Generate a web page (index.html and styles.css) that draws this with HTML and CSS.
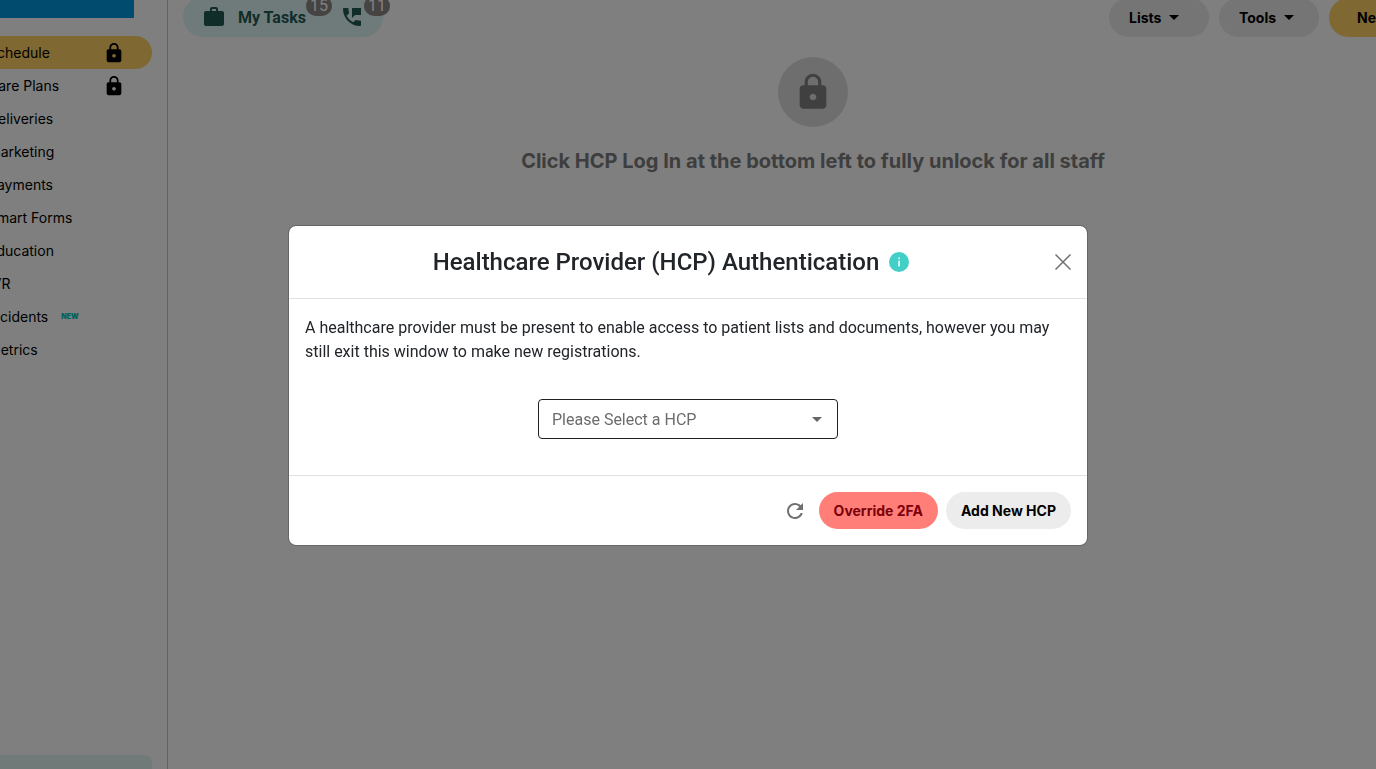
FILE: index.html
```
<!DOCTYPE html>
<html lang="en">
<head>
<meta charset="utf-8">
<title>Schedule</title>
<link rel="stylesheet" href="styles.css">
</head>
<body>
<svg class="sprite" aria-hidden="true">
  <symbol id="lock" viewBox="0 0 24 24"><path d="M18 8h-1V6c0-2.760-2.240-5-5-5S7 3.240 7 6v2H6c-1.100 0-2 .9-2 2v10c0 1.100.9 2 2 2h12c1.100 0 2-.9 2-2V10c0-1.100-.9-2-2-2zm-6 9c-1.100 0-2-.9-2-2s.9-2 2-2 2 .9 2 2-.9 2-2 2zm3.100-9H8.900V6c0-1.710 1.390-3.100 3.100-3.100s3.100 1.390 3.100 3.100v2z"/></symbol>
  <symbol id="caret" viewBox="0 0 10 5"><path d="M0 0h10L5 5z"/></symbol>
</svg>

<div class="app">
  <aside class="sidebar">
    <div class="brand"></div>
    <nav class="menu">
      <a class="item active" href="#">Schedule<svg class="item-lock"><use href="#lock"/></svg></a>
      <a class="item" href="#">Care Plans<svg class="item-lock"><use href="#lock"/></svg></a>
      <a class="item" href="#">Deliveries</a>
      <a class="item" href="#">Marketing</a>
      <a class="item" href="#">Payments</a>
      <a class="item" href="#">Smart Forms</a>
      <a class="item" href="#">Education</a>
      <a class="item" href="#">IVR</a>
      <a class="item" href="#">Incidents<span class="new">NEW</span></a>
      <a class="item" href="#">Metrics</a>
    </nav>
    <div class="login"></div>
  </aside>

  <main class="main">
    <header class="topbar">
      <div class="tasks">
        <button class="task" type="button">
          <svg class="task-icon" viewBox="0 0 24 24"><path d="M20 6h-4V4c0-1.110-.89-2-2-2h-4c-1.110 0-2 .89-2 2v2H4c-1.110 0-2 .89-2 2v11c0 1.110.89 2 2 2h16c1.110 0 2-.89 2-2V8c0-1.110-.89-2-2-2zm-6 0h-4V4h4v2z"/></svg>
          My Tasks
          <span class="badge">15</span>
        </button>
        <button class="task" type="button" aria-label="Calls">
          <svg class="task-icon" viewBox="0 0 24 24"><path d="M20 15.500c-1.250 0-2.450-.2-3.570-.57-.35-.11-.74-.03-1.020.24l-2.200 2.200c-2.830-1.440-5.150-3.750-6.590-6.580l2.200-2.210c.28-.27.36-.66.25-1.010C8.700 6.450 8.500 5.250 8.500 4c0-.55-.45-1-1-1H4c-.55 0-1 .45-1 1 0 9.390 7.610 17 17 17 .55 0 1-.45 1-1v-3.500c0-.55-.45-1-1-1zM12 3v10l3-3h6V3h-9z"/></svg>
          <span class="badge">11</span>
        </button>
      </div>
      <div class="actions">
        <button class="pill" type="button">Lists<svg class="caret"><use href="#caret"/></svg></button>
        <button class="pill" type="button">Tools<svg class="caret"><use href="#caret"/></svg></button>
        <button class="pill primary" type="button">New</button>
      </div>
    </header>
    <section class="locked">
      <div class="locked-circle"><svg class="locked-icon"><use href="#lock"/></svg></div>
      <h2 class="locked-title">Click HCP Log In at the bottom left to fully unlock for all staff</h2>
    </section>
  </main>
</div>

<div class="backdrop">
  <div class="dialog" role="dialog" aria-modal="true" aria-labelledby="dialog-title">
    <header class="dialog-head">
      <h1 class="dialog-title" id="dialog-title">Healthcare Provider (HCP) Authentication</h1>
      <svg class="info" viewBox="0 0 20 20"><circle class="info-disc" cx="10" cy="10" r="10"/><path class="info-mark" d="M9.300 5.500h1.500v1.500H9.300zM9.300 8.500h1.500v6H9.300z"/></svg>
      <button class="close" type="button" aria-label="Close"><svg class="close-icon" viewBox="0 0 16 16"><path d="M.5.5l15 15M15.500.5l-15 15"/></svg></button>
    </header>
    <div class="dialog-body">
      <p class="note">A healthcare provider must be present to enable access to patient lists and documents, however you may still exit this window to make new registrations.</p>
      <div class="field">
        <select class="select" aria-label="Healthcare provider"><option>Please Select a HCP</option></select>
        <svg class="field-caret"><use href="#caret"/></svg>
      </div>
    </div>
    <footer class="dialog-foot">
      <button class="refresh" type="button" aria-label="Refresh"><svg class="refresh-icon" viewBox="0 0 24 24"><path d="M17.650 6.350C16.200 4.900 14.210 4 12 4c-4.420 0-7.990 3.580-7.990 8s3.570 8 7.990 8c3.730 0 6.840-2.550 7.730-6h-2.080c-.82 2.330-3.040 4-5.650 4-3.310 0-6-2.690-6-6s2.690-6 6-6c1.660 0 3.140.69 4.220 1.780L13 11h7V4l-2.350 2.350z"/></svg></button>
      <button class="action danger" type="button">Override 2FA</button>
      <button class="action" type="button">Add New HCP</button>
    </footer>
  </div>
</div>
</body>
</html>
```
FILE: styles.css
```
* { box-sizing: border-box; }
body { margin: 0; overflow: hidden; font-family: Inter, "Liberation Sans", sans-serif; color: #212529; background: #fff; }
button { border: 0; background: none; padding: 0; font-family: inherit; color: inherit; cursor: pointer; }
.sprite { display: none; }

.app { display: flex; height: 100vh; margin: 0 -82px 0 -60px; }

.sidebar { display: flex; flex-direction: column; flex: none; width: 228px; border-right: 1px solid #c4c4c4; }
.brand { height: 18px; width: 194px; background: #0096dc; }
.menu { display: flex; flex-direction: column; margin-top: 18px; padding-right: 15px; }
.item { display: flex; align-items: center; height: 33px; padding: 0 27px 0 48px; border-radius: 0 17px 17px 0; font-size: 14px; color: #000; text-decoration: none; }
.active { background: #ffd062; }
.item-lock { width: 22px; height: 22px; margin-left: auto; }
.new { margin-left: 13px; font-size: 7px; font-weight: 900; color: #00c4b8; }
.login { margin: auto 15px 0 0; height: 14px; border-radius: 0 8px 0 0; background: #e0f4f1; }

.main { flex: 1; min-width: 0; }
.topbar { display: flex; justify-content: space-between; align-items: flex-end; height: 37px; padding: 0 26px 0 15px; }
.tasks { display: flex; align-items: center; gap: 34px; height: 40px; width: 200px; padding-left: 19px; border-radius: 20px; background: #dff5f4; color: #235a55; }
.task { position: relative; display: flex; align-items: center; gap: 12px; font-family: Roboto, sans-serif; font-size: 16px; font-weight: 700; }
.task-icon { width: 24px; height: 24px; fill: currentColor; }
.badge { position: absolute; left: 100%; bottom: 13px; min-width: 26px; padding: 0 4px; border-radius: 10px; background: #8c8686; color: #fff; font-size: 16px; font-weight: 400; line-height: 20px; text-align: center; }
.actions { display: flex; gap: 10px; }
.pill { display: flex; align-items: center; gap: 8px; width: 100px; height: 39px; padding-left: 20px; border-radius: 20px; background: #eaeaea; color: #000; font-size: 14px; font-weight: 700; }
.primary { width: 103px; padding-left: 28px; background: #ffd062; }
.caret { width: 10px; height: 5px; }

.locked { display: flex; flex-direction: column; align-items: center; padding-top: 20px; }
.locked-circle { display: flex; align-items: center; justify-content: center; width: 70px; height: 70px; border-radius: 50%; background: #dcdcdc; }
.locked-icon { width: 40px; height: 40px; fill: #808080; }
.locked-title { margin: 20px 0 0; font-size: 20px; line-height: 28px; font-weight: 700; color: #7c7c7c; }

.backdrop { position: fixed; inset: 0; display: flex; justify-content: center; align-items: flex-start; padding-top: 225px; background: rgba(0, 0, 0, 0.5); }
.dialog { width: 100%; max-width: 800px; border: 1px solid rgba(0, 0, 0, 0.2); border-radius: 8px; background: #fff; background-clip: padding-box; }
.dialog-head { display: flex; align-items: center; justify-content: center; gap: 10px; height: 73px; padding: 0 16px; border-bottom: 1px solid #dee2e6; }
.dialog-title { margin: 0 0 0 auto; font-family: Roboto, sans-serif; font-size: 24px; line-height: 32px; font-weight: 500; }
.info { width: 20px; height: 20px; }
.info-disc { fill: #42cfc8; }
.info-mark { fill: #fff; }
.close { display: flex; margin-left: auto; padding-left: 8px; }
.close-icon { width: 16px; height: 16px; fill: none; stroke: #707070; stroke-width: 1.500; }
.dialog-body { display: flex; flex-direction: column; align-items: center; padding: 17px 16px 36px; }
.note { margin: 0; font-family: Roboto, sans-serif; font-size: 16px; line-height: 24px; }
.field { position: relative; width: 300px; margin-top: 35px; }
.select { width: 100%; height: 40px; padding: 0 13px; appearance: none; border: 1px solid #212121; border-radius: 4px; background: #fff; color: #6c6c6c; font-family: Roboto, sans-serif; font-size: 16px; }
.field-caret { position: absolute; right: 16px; top: 18px; width: 10px; height: 5px; fill: #666; }
.dialog-foot { display: flex; align-items: center; justify-content: flex-end; gap: 8px; padding: 16px; border-top: 1px solid #dee2e6; }
.refresh { display: flex; margin-right: 4px; }
.refresh-icon { width: 24px; height: 24px; fill: #707070; }
.action { height: 37px; padding: 0 15px; border-radius: 19px; background: #ececec; color: #000; font-size: 14px; font-weight: 700; }
.danger { background: #ff7f78; color: #7b0009; }
```
